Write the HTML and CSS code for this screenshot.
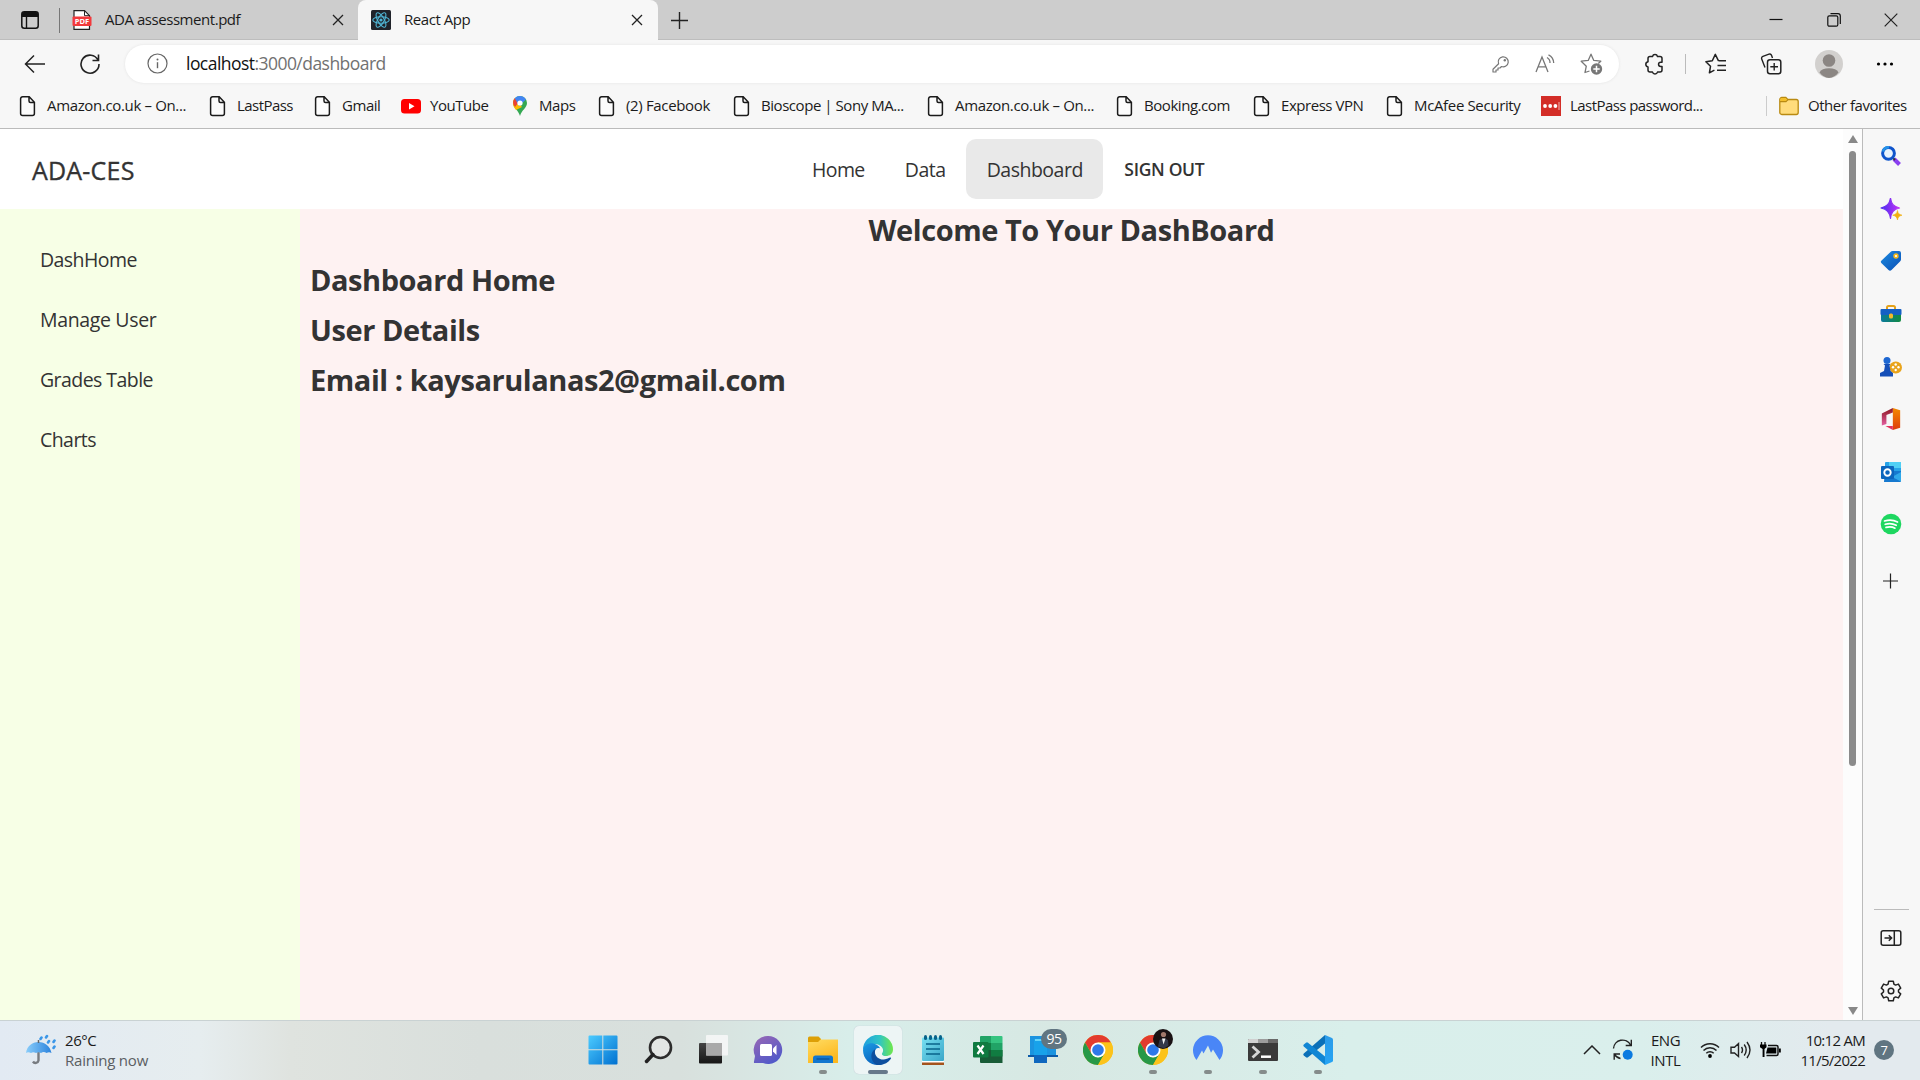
FILE: index.html
```html
<!DOCTYPE html>
<html lang="en">
<head>
<meta charset="utf-8">
<title>React App</title>
<link rel="stylesheet" href="styles.css">
</head>
<body>
<svg class="defs" width="0" height="0">
  <defs>
    <symbol id="file" viewBox="0 0 20 22"><path d="M4.600 1.800h6.600l5.200 5.400v11.200a2 2 0 0 1-2 2H4.600a2 2 0 0 1-2-2V3.800a2 2 0 0 1 2-2zM11 2v4a1.500 1.500 0 0 0 1.500 1.500h3.700" fill="#fcfcfc" stroke="#1b1b1b" stroke-width="1.500"/></symbol>
    <symbol id="close" viewBox="0 0 12 12"><path d="M1 1l10 10M11 1L1 11" stroke="#222" stroke-width="1.300"/></symbol>
    <symbol id="chrome" viewBox="0 0 30 30">
      <circle cx="15" cy="15" r="15" fill="#fbc116"/>
      <path d="M2 7.500A15 15 0 0 1 28 7.500L15 7.500 8.500 18.750z" fill="#e33b2e"/>
      <path d="M2 7.500L8.500 18.750 15 22.500 21.500 18.750 15 30A15 15 0 0 1 2 7.500z" fill="#279847"/>
      <path d="M28 7.500H15L21.500 18.750 15 30A15 15 0 0 0 28 7.500z" fill="#fcc31b"/>
      <circle cx="15" cy="15" r="7.500" fill="#fff"/><circle cx="15" cy="15" r="5.800" fill="#2f78ea"/>
    </symbol>
    <linearGradient id="gWin" x2="1" y2="1"><stop stop-color="#4ccbff"/><stop offset="1" stop-color="#0070d0"/></linearGradient>
    <linearGradient id="gDark" x2="0" y2="1"><stop stop-color="#444"/><stop offset="1" stop-color="#161616"/></linearGradient>
    <linearGradient id="gChat" x2="0.600" y2="1"><stop stop-color="#9a68b4"/><stop offset="1" stop-color="#5159c9"/></linearGradient>
    <linearGradient id="gFold" x2="0.500" y2="1"><stop stop-color="#ffdc63"/><stop offset="1" stop-color="#fdb81e"/></linearGradient>
    <linearGradient id="gEdge" x2="1"><stop stop-color="#1e9fe0"/><stop offset="0.550" stop-color="#2fc5c4"/><stop offset="1" stop-color="#70e84a"/></linearGradient>
    <linearGradient id="gEdge2" x2="0.500" y2="1"><stop stop-color="#1a9be4"/><stop offset="1" stop-color="#0b62bd"/></linearGradient>
    <linearGradient id="gNote" x2="1" y2="1"><stop stop-color="#78e0f2"/><stop offset="1" stop-color="#3aa6c8"/></linearGradient>
    <linearGradient id="gStar" x2="1"><stop stop-color="#4b2cf0"/><stop offset="1" stop-color="#c134f5"/></linearGradient>
    <linearGradient id="gBlue" x2="1" y2="1"><stop stop-color="#1d8be0"/><stop offset="1" stop-color="#0a4fb5"/></linearGradient>
    <linearGradient id="gGreen" x2="1"><stop stop-color="#0b7a9e"/><stop offset="1" stop-color="#128a42"/></linearGradient>
    <linearGradient id="gOff" x2="0" y2="1"><stop stop-color="#f48a00"/><stop offset="1" stop-color="#dd3a0c"/></linearGradient>
    <linearGradient id="gOff2" x2="0" y2="1"><stop stop-color="#8c1620"/><stop offset="1" stop-color="#e35fa0"/></linearGradient>
    <linearGradient id="gUmb" x2="1"><stop stop-color="#8acdfa"/><stop offset="1" stop-color="#2b83dd"/></linearGradient>
    <linearGradient id="gCode" x2="0" y2="1"><stop stop-color="#2c9be8"/><stop offset="1" stop-color="#25a4f4"/></linearGradient>
  </defs>
</svg>

<header class="tabs">
  <div class="tab-menu"><svg width="18" height="18" viewBox="0 0 18 18"><rect x=".8" y=".8" width="16.400" height="16.400" rx="2.500" fill="none" stroke="#111" stroke-width="1.500"/><path d="M1 3a2 2 0 0 1 2-2h12a2 2 0 0 1 2 2v3H1z" fill="#111"/><path d="M5.500 6v11" stroke="#111" stroke-width="1.400"/></svg></div>
  <div class="tab">
    <svg class="fav" viewBox="0 0 20 20"><path d="M2 .7h10.500l5 5v13.600H2z" fill="#fff" stroke="#222" stroke-width="1.200"/><path d="M12.500.7v5h5" fill="none" stroke="#222"/><rect x=".5" y="6.500" width="19" height="9.500" rx="1" fill="#f2393c"/><text x="10" y="14" class="pdf-label">PDF</text></svg>
    <span class="tab-title">ADA assessment.pdf</span>
    <svg class="x"><use href="#close"/></svg>
  </div>
  <div class="tab active">
    <svg class="fav" viewBox="0 0 20 20"><rect width="20" height="20" rx="1.500" fill="#20232a"/><g fill="none" stroke="#4fb6d6" stroke-width="1.100"><ellipse cx="10" cy="10" rx="8.200" ry="3.200"/><ellipse cx="10" cy="10" rx="8.200" ry="3.200" transform="rotate(60 10 10)"/><ellipse cx="10" cy="10" rx="8.200" ry="3.200" transform="rotate(120 10 10)"/></g><circle cx="10" cy="10" r="1.600" fill="#4fb6d6"/></svg>
    <span class="tab-title">React App</span>
    <svg class="x"><use href="#close"/></svg>
  </div>
  <svg class="new-tab" width="17" height="17" viewBox="0 0 17 17"><path d="M8.500 0v17M0 8.500h17" stroke="#222" stroke-width="1.400"/></svg>
  <div class="win-controls">
    <svg width="14" height="14" viewBox="0 0 14 14"><path d="M.5 6.500h13" stroke="#111" stroke-width="1.200"/></svg>
    <svg width="14" height="14" viewBox="0 0 14 14"><rect x=".8" y="2.800" width="10" height="10.400" rx="1.500" fill="none" stroke="#111" stroke-width="1.200"/><path d="M3.500.7h7.500a2.300 2.300 0 0 1 2.300 2.300v8" fill="none" stroke="#111" stroke-width="1.200"/></svg>
    <svg width="14" height="14" viewBox="0 0 14 14"><path d="M.7.700l12.600 12.600M13.300.7L.7 13.300" stroke="#222" stroke-width="1.200"/></svg>
  </div>
</header>

<div class="toolbar">
  <svg class="back" width="22" height="20" viewBox="0 0 22 20"><path d="M21 10H1.500M10 1.500L1.500 10l8.500 8.500" fill="none" stroke="#222" stroke-width="1.500"/></svg>
  <svg class="reload" width="22" height="22" viewBox="0 0 22 22"><path d="M19 7A9 9 0 1 0 20 11M19.500 1.500V7.500H13.500" fill="none" stroke="#222" stroke-width="1.600"/></svg>
  <div class="address">
    <svg class="info" width="21" height="21" viewBox="0 0 21 21"><circle cx="10.500" cy="10.500" r="9.500" fill="none" stroke="#666" stroke-width="1.200"/><path d="M10.500 9.200v6" stroke="#666" stroke-width="1.400"/><circle cx="10.500" cy="6.400" r="1" fill="#666"/></svg>
    <span class="url"><b>localhost</b>:3000/dashboard</span>
    <svg width="18" height="18" viewBox="0 0 18 18"><path d="M6.600 8.700A5 5 0 1 1 9.500 11.500L8 13H6v2H4v2H1v-2.800z" fill="none" stroke="#777" stroke-width="1.200" stroke-linejoin="round"/><circle cx="12.800" cy="5.200" r="1.200" fill="#777"/></svg>
    <svg width="20" height="20" viewBox="0 0 20 20"><path d="M1 18L7 3l6 15M3.200 12.800h7.600M12 3.500a6 6 0 0 1 3 5.500M13.500.8A9.500 9.500 0 0 1 18.700 9" fill="none" stroke="#777" stroke-width="1.300"/></svg>
    <svg width="23" height="22" viewBox="0 0 23 22"><path d="M9.500 18L5 19.500l1.300-6.300L1.200 8.200l7-.8L11 1.200l2.800 6.200 7 .8-2.500 2.300" fill="none" stroke="#777" stroke-width="1.300" stroke-linejoin="round"/><circle cx="16.500" cy="16" r="5.700" fill="#777"/><path d="M16.500 12.800v6.400M13.300 16h6.400" stroke="#fff" stroke-width="1.500"/></svg>
  </div>
  <div class="tools">
    <svg width="22" height="22" viewBox="0 0 22 22"><path d="M6 3.500h2.500a2.600 2.600 0 0 1 5 0H16q2 0 2 2V9.200h-1.300a2.100 2.100 0 0 0 0 4.300H18v3.600q0 2-2 2h-2.500a2.600 2.600 0 0 1-5 0H6q-2 0-2-2V14a2.700 2.700 0 0 1 0-5.300V5.500q0-2 2-2z" fill="none" stroke="#222" stroke-width="1.500" stroke-linejoin="round"/></svg>
    <i class="bar"></i>
    <svg width="22" height="22" viewBox="0 0 22 22"><path d="M13.500 7.800L10.300 1.400 7.300 7.700.9 8.700l4.600 4.600-1.100 6.500 5-2.600M13.500 7.800H21M12.500 12.500H21M12 17.200h9" fill="none" stroke="#222" stroke-width="1.500" stroke-linejoin="round"/></svg>
    <svg width="22" height="22" viewBox="0 0 22 22"><path d="M5 14.500L1.700 6A2 2 0 0 1 2.900 3.400L9 1.200a2 2 0 0 1 2.600 1.200L12.500 5" fill="none" stroke="#222" stroke-width="1.400"/><rect x="7.500" y="6.800" width="13.300" height="14" rx="2.500" fill="none" stroke="#222" stroke-width="1.500"/><path d="M14.200 10v7.600M10.300 13.800h7.700" stroke="#222" stroke-width="1.400"/></svg>
    <svg width="28" height="28" viewBox="0 0 28 28"><circle cx="14" cy="14" r="14" fill="#d2d0ce"/><circle cx="14" cy="10.500" r="6.300" fill="#8b8683"/><path d="M4.500 22.500a10 6 0 0 1 19 0A14 14 0 0 1 14 28a14 14 0 0 1-9.500-5.500z" fill="#8b8683"/></svg>
    <svg width="18" height="4" viewBox="0 0 18 4"><circle cx="2.500" cy="2" r="1.600"/><circle cx="9" cy="2" r="1.600"/><circle cx="15.500" cy="2" r="1.600"/></svg>
  </div>
</div>

<nav class="bookmarks">
  <a><svg><use href="#file"/></svg><span class="wide">Amazon.co.uk – On...</span></a>
  <a><svg><use href="#file"/></svg><span class="mid">LastPass</span></a>
  <a><svg><use href="#file"/></svg><span>Gmail</span></a>
  <a><svg viewBox="0 0 20 22"><rect y="4" width="20" height="14.500" rx="3.500" fill="#f00"/><path d="M8 8v6.500l5.500-3.200z" fill="#fff"/></svg><span>YouTube</span></a>
  <a><svg viewBox="0 0 20 22"><path d="M10 1a7 7 0 0 1 7 7c0 5-5.500 7-7 13C8.500 15 3 13 3 8a7 7 0 0 1 7-7z" fill="#34a853"/><path d="M3 8a7 7 0 0 1 1.800-4.700L12 12 6 15C4.500 13 3 11 3 8z" fill="#fbbc04"/><path d="M3.200 6.500A7 7 0 0 1 5 3l4 4-4 5C3.500 10 3 8.500 3.200 6.500z" fill="#ea4335"/><path d="M4.800 3.300A7 7 0 0 1 16 4.500L9 11z" fill="#4285f4"/><circle cx="10" cy="8" r="2.600" fill="#fff"/></svg><span>Maps</span></a>
  <a><svg><use href="#file"/></svg><span class="wide">(2) Facebook</span></a>
  <a><svg><use href="#file"/></svg><span>Bioscope | Sony MA...</span></a>
  <a><svg><use href="#file"/></svg><span class="wide">Amazon.co.uk – On...</span></a>
  <a><svg><use href="#file"/></svg><span>Booking.com</span></a>
  <a><svg><use href="#file"/></svg><span>Express VPN</span></a>
  <a><svg><use href="#file"/></svg><span class="wide">McAfee Security</span></a>
  <a><svg viewBox="0 0 20 22"><path fill="#d32d27" d="M0 1h20v20H0z"/><circle cx="4" cy="11" r="1.900" fill="#fff"/><circle cx="9.200" cy="11" r="1.900" fill="#fff"/><circle cx="14.400" cy="11" r="1.900" fill="#fff"/><path d="M18 7v8" stroke="#f3b5b2"/></svg><span class="mid">LastPass password...</span></a>
  <a class="other"><svg viewBox="0 0 20 22"><path d="M.8 4.500a2 2 0 0 1 2-2h4l2 2h8.400a2 2 0 0 1 2 2v11a2 2 0 0 1-2 2H2.800a2 2 0 0 1-2-2z" fill="#ffdc7c" stroke="#b98a12" stroke-width="1.300"/><path d="M1.400 4.500a1.300 1.300 0 0 1 1.300-1.400h3.800l1.700 1.700-1.500 1.700H1.400z" fill="#f3bf2a"/><path d="M1 6.700h6l2-2" fill="none" stroke="#b98a12" stroke-width="1.200"/></svg><span>Other favorites</span></a>
</nav>

<div class="viewport">
  <div class="page">
    <div class="navbar">
      <a class="brand">ADA-CES</a>
      <ul class="menu"><li>Home</li><li class="data">Data</li><li class="current">Dashboard</li><li class="signout">SIGN OUT</li></ul>
    </div>
    <div class="body">
      <ul class="drawer"><li class="snug">DashHome</li><li>Manage User</li><li class="snug">Grades Table</li><li class="snug">Charts</li></ul>
      <main><h2 class="welcome">Welcome To Your DashBoard</h2><h2>Dashboard Home</h2><h2>User Details</h2><h2>Email : kaysarulanas2@gmail.com</h2></main>
    </div>
  </div>
  <div class="scroll"><i class="up"></i><i class="thumb"></i><i class="down"></i></div>
  <aside class="apps">
    <div><svg viewBox="0 0 22 22"><path d="M14 14l5.500 5.500" stroke="#8a3ff0" stroke-width="4"/><path d="M12.500 12.500l2.500 2.500" stroke="#333" stroke-width="2"/><circle cx="8.500" cy="8.300" r="5.900" fill="#e8f3fd" stroke="#0f55cc" stroke-width="3"/><path d="M3 6.500a6 6 0 0 1 6-4.200" fill="none" stroke="#2593e8" stroke-width="2.500"/></svg></div>
    <div><svg viewBox="0 0 22 22"><path d="M10.500 0c.8 6 3 8.400 9 10-6 1.500-8.200 4-9 10.500-1-6.500-3.500-9-9.500-10.500C7 8.400 9.500 6 10.500 0z" fill="url(#gStar)" stroke="url(#gStar)" stroke-width="1.200" stroke-linejoin="round"/><path d="M17.500 12.500c.5 3 1.500 4 4.500 4.700-3 .7-4 1.800-4.500 4.800-.6-3-1.800-4.100-4.800-4.800 3-.7 4.200-1.700 4.800-4.700z" fill="#f2b010" stroke="#f2b010" stroke-width=".6"/></svg></div>
    <div><svg viewBox="0 0 22 22"><path d="M12.500 1H19a2 2 0 0 1 2 2v6.500q0 1-1 2L11.500 20q-1.500 1.500-3 0L1.300 13q-1-1.200 0-2.300L10.500 2q1-1 2-1z" fill="url(#gBlue)"/><circle cx="16" cy="6" r="1.900" fill="#fff" stroke="#f3b81c" stroke-width="1.600"/></svg></div>
    <div><svg viewBox="0 0 22 22"><path d="M7 7V4.500A1.500 1.500 0 0 1 8.500 3h5A1.500 1.500 0 0 1 15 4.500V7" fill="none" stroke="#e5a21a" stroke-width="2"/><path d="M1 11h20v6a2 2 0 0 1-2 2H3a2 2 0 0 1-2-2z" fill="url(#gGreen)"/><rect x=".5" y="6" width="21" height="6" rx="1" fill="#1560c4"/><rect x="9" y="10.500" width="4" height="5" rx="1.500" fill="#f4b92a"/></svg></div>
    <div><svg viewBox="0 0 22 22"><rect x="9.500" y="5.500" width="12.500" height="12" rx="6" fill="#e9a41c"/><g fill="#fff"><circle cx="15.700" cy="8.500" r="1.200"/><circle cx="15.700" cy="14" r="1.200"/><circle cx="13" cy="11.300" r="1.200"/><circle cx="18.500" cy="11.300" r="1.200"/></g><circle cx="7" cy="4.500" r="3.500" fill="#1d67d2"/><path d="M3.500 8h7l-1 1.500 1 5.500 2.500 2v3.500H0V17l4-2 1-5.500z" fill="#154fb8"/></svg></div>
    <div><svg viewBox="0 0 22 24"><path d="M13 0l8 2.500v19L13 24z" fill="url(#gOff)"/><path d="M13 0v5L6 7.500v10L1 19V6z" fill="url(#gOff2)"/><path d="M5 19.500h8V24z" fill="#e2325e"/></svg></div>
    <div><svg viewBox="0 0 22 22"><rect x="5" y="1" width="16" height="10" rx="1" fill="#27a3e8"/><path d="M9 1h12v6H9z" fill="#50d0f5"/><path d="M5 10h16v10a1 1 0 0 1-1 1H4z" fill="#1679cf"/><path d="M21 11v9.500L12 16z" fill="#30a9ea"/><rect x="1" y="5" width="13" height="13" rx="1" fill="#0c66bd"/><circle cx="7.500" cy="11.500" r="3.200" fill="none" stroke="#fff" stroke-width="1.900"/></svg></div>
    <div><svg viewBox="0 0 22 22"><circle cx="11" cy="11" r="10.300" fill="#1ed760"/><path d="M4.500 8q7-2.200 13 1M5.200 11.300q6-1.700 11 1M6 14.400q5-1.400 9 .8" fill="none" stroke="#fff" stroke-width="1.700" stroke-linecap="round"/></svg></div>
    <div class="add"><svg viewBox="0 0 22 22"><path d="M10.500 3.500v15M3 11h15" stroke="#222" stroke-width="1.200"/></svg></div>
    <div class="dock first"><svg viewBox="0 0 22 22"><rect x="1.200" y="3.700" width="19.600" height="14.600" rx="2" fill="none" stroke="#222" stroke-width="1.500"/><path d="M14.300 4v14M4.500 11h7M8.800 8.200l2.800 2.800-2.800 2.800" fill="none" stroke="#222" stroke-width="1.500"/></svg></div>
    <div class="dock"><svg viewBox="0 0 22 22"><path d="M8.700 1.200h4.600l.6 2.900 1.700 1 2.800-1 2.300 4-2.200 1.900v2l2.200 1.900-2.300 4-2.800-1-1.700 1-.6 2.900H8.700l-.6-2.900-1.700-1-2.800 1-2.300-4L3.500 12v-2L1.300 8.100l2.300-4 2.800 1 1.700-1z" fill="none" stroke="#222" stroke-width="1.500" stroke-linejoin="round"/><circle cx="11" cy="11" r="2.800" fill="none" stroke="#222" stroke-width="1.500"/></svg></div>
  </aside>
</div>

<footer class="taskbar">
  <div class="weather">
    <svg width="30" height="32" viewBox="0 0 30 32"><path d="M12.500 16v10.500a3 3 0 0 1-5.500 1" fill="none" stroke="#777b80" stroke-width="2.400"/><path d="M0 19C1 12 6 8 12.500 8S24 12 25.500 19q-2.500-1.500-5 0-3-2-5.500 0-2.500-1.500-5 0-3-1.500-5 0-3-1.500-5 0z" fill="url(#gUmb)"/><path d="M12.500 6v3" stroke="#666" stroke-width="1.500"/><path d="M14.500 5l1-1.500M20 3.500L21 2M22 8.500L23 7M27.500 8l1-1.500M27.500 14l1-1.500" stroke="#3a96e8" stroke-width="2.600" stroke-linecap="round"/></svg>
    <p><span class="temp">26°C</span><br><span class="cond">Raining now</span></p>
  </div>
  <div class="launch">
    <div><svg viewBox="0 0 30 30"><path d="M.5 1.500q0-1 1-1h12.800v13.800H.5zM15.300.5h13.200q1 0 1 1v12.800H15.300zM.5 15.300h13.800v14.200H1.500q-1 0-1-1zM15.300 15.300h14.200v13.200q0 1-1 1H15.300z" fill="url(#gWin)"/></svg></div>
    <div><svg viewBox="0 0 30 30"><circle cx="17.500" cy="12.500" r="10.500" fill="#e3e6e4" stroke="#2d2d2d" stroke-width="2.600"/><path d="M10 19.500L3.500 26.500" stroke="#222" stroke-width="3.500" stroke-linecap="round"/></svg></div>
    <div><svg viewBox="0 0 30 30"><rect x="1" y="8" width="23" height="20.500" rx="1" fill="url(#gDark)"/><rect x="8" y="0" width="22" height="20.500" rx="1" fill="#f8f8f8" opacity=".85"/><path d="M8 8h16v12.500H8z" fill="#a9a9a9"/></svg></div>
    <div><svg viewBox="0 0 30 30"><path d="M15 1a14 14 0 1 1-5 27H2q-1.500 0-1-1.500L2 21A14 14 0 0 1 15 1z" fill="url(#gChat)"/><rect x="7" y="9" width="12" height="12" rx="1.500" fill="#fff"/><path d="M20 13.500l3.500-3.500v10L20 16.500z" fill="#fff"/></svg></div>
    <div class="open"><svg viewBox="0 0 30 30"><path d="M0 3q0-1.500 1.500-1.500h9L13 4v5H0z" fill="#dda007"/><path d="M0 7h10l2.500-2.500H30V28H0z" fill="url(#gFold)"/><path d="M5 28v-5q0-2.500 2.500-2.500h15Q25 20.500 25 23v5z" fill="#1277cf"/><path d="M8.500 24h13" stroke="#075095" stroke-width="1.200"/></svg></div>
    <div class="open focused"><svg viewBox="0 0 30 30"><path d="M0 15A15 15 0 0 1 30 14.500C30 19 26.500 21 23 21c-3 0-4.800-1.500-3.800-2.800C22 14 18 9 11.500 9 6 9 1.500 12 0 15z" fill="url(#gEdge)"/><path d="M0 15C1 10 6 7.500 10.500 8.500c4 1 6 3 6.500 5-3-1.500-5.500 1-5.200 5C12 25 17 29 21 28.500 12 33 0 27 0 15z" fill="url(#gEdge2)"/><path d="M12.500 14c-2.500 6 3 11 8.500 10.500 3-.2 5-2 6.500-2 .8 0 .8.800 0 1.800C24.500 28.500 19 30.700 14 29.900 7 27 6.500 17 12.500 14z" fill="#0e4f9e"/></svg></div>
    <div><svg viewBox="0 0 30 30"><path d="M4 26h22v4H4z" fill="#a3531c"/><path d="M4 25h22v2.500H4z" fill="#fff"/><rect x="4" y="2.500" width="22" height="23.500" rx="1" fill="url(#gNote)"/><path d="M8 9h14M8 14h14M8 19h14" stroke="#08638a" stroke-width="1.700"/><g fill="#08638a"><rect x="6" width="3" height="5" rx="1.500"/><rect x="11" width="3" height="5" rx="1.500"/><rect x="16" width="3" height="5" rx="1.500"/><rect x="21" width="3" height="5" rx="1.500"/></g></svg></div>
    <div><svg viewBox="0 0 30 30"><path d="M7 2q0-1 1-1h10v7H7z" fill="#21a366"/><path d="M18 1h10.500q1 0 1 1v6H18z" fill="#35c480"/><path d="M7 8h11v7H7z" fill="#107c41"/><path d="M18 8h11.500v7H18z" fill="#21a366"/><path d="M7 15h22.500v13H8q-1 0-1-1z" fill="#185c37"/><path d="M18 15h11.500v6.500H18z" fill="#107c41"/><rect x="0" y="7" width="15.500" height="15.500" rx="1" fill="#0f7a40"/><path d="M4.500 10.500l6 8.500M10.500 10.500l-6 8.500" stroke="#fff" stroke-width="2.200"/></svg></div>
    <div><svg viewBox="0 0 30 30"><path d="M2 1h13v20H2zM14 9h14v12H14z" fill="#1b94e0"/><path d="M0 20h30v2H0z" fill="#0b5aa8"/><path d="M6 4h13v18H6z" fill="#22b0f2"/><path d="M6 17h13v11H6z" fill="#0f67be"/><path d="M6 4h13v16H6z" fill="#18a2ea"/><path d="M7 5h11" stroke="#7ee4ff" stroke-width="1.500"/></svg><b class="count">95</b></div>
    <div><svg><use href="#chrome"/></svg></div>
    <div class="open"><svg><use href="#chrome"/></svg><svg class="profile" viewBox="0 0 20 20"><circle cx="10" cy="10" r="10" fill="#1a1214"/><circle cx="10.500" cy="5.500" r="2.600" fill="#a2786b"/><path d="M5 17.500l1.500-6.500 3-1.500h2.500l3 1.500.5 5.500-4.500 3z" fill="#343848"/><path d="M9 9.500l1.500 6 2-6z" fill="#eee"/></svg></div>
    <div class="open"><svg viewBox="0 0 30 30"><path d="M3.500 25A15 15 0 1 1 26.500 25L20 14.500l-2 3.200-3-7.200-4.500 8-1.500-3z" fill="#4a86f7"/></svg></div>
    <div class="open"><svg viewBox="0 0 30 30"><rect y="4" width="30" height="22" rx="1" fill="#3a3a3a"/><path d="M0 5q0-1 1-1h9v4H0z" fill="#d0d0d0"/><path d="M10 4h10v4H10z" fill="#9c9c9c"/><path d="M20 4h9q1 0 1 1v3H20z" fill="#696969"/><path d="M4.500 11.500l6 5.500-6 5.500" fill="none" stroke="#d5d5d5" stroke-width="2.800"/><path d="M13 21.700h10" stroke="#fff" stroke-width="2.500"/></svg></div>
    <div class="open"><svg viewBox="0 0 30 30"><path d="M22 0L.8 18.500q-1 1 0 2l2.200 1.800q1 .7 2 0L22 8.500z" fill="#0b70b8"/><path d="M22 30L.8 11.500q-1-1 0-2L3 7.700q1-.7 2 0L22 21.500z" fill="#1086d4"/><path d="M22 0l7 3q1 .5 1 1.500v21q0 1-1 1.500l-7 3z" fill="url(#gCode)"/></svg></div>
  </div>
  <div class="tray">
    <svg class="chev" width="18" height="10" viewBox="0 0 18 10"><path d="M1 9l8-8 8 8" fill="none" stroke="#222" stroke-width="1.500"/></svg>
    <svg class="sync" width="22" height="22" viewBox="0 0 22 22"><path d="M1.500 9.500A9 9 0 0 1 18.500 6M19.300.8v5.700h-5.600M8 15H2.200v5.700M2.500 15.500a9 9 0 0 0 6 4" fill="none" stroke="#222" stroke-width="1.400"/><circle cx="15.700" cy="15.700" r="5" fill="#0b7ae0"/></svg>
    <p class="lang">ENG<br>INTL</p>
    <svg class="wifi" width="20" height="18" viewBox="0 0 20 18"><path d="M1 6.500a12.500 12.500 0 0 1 18 0M3.500 9.500a9 9 0 0 1 13 0M6.300 12.300a5.200 5.200 0 0 1 7.400 0" fill="none" stroke="#222" stroke-width="1.500"/><circle cx="10" cy="15" r="1.900"/></svg>
    <svg class="sound" width="21" height="18" viewBox="0 0 21 18"><path d="M1 6.200h3.500L8.500 2.500v13L4.500 12H1zM11.500 6q2 3 0 6M14.200 3.500q4 5.500 0 11M17 1q6 8 0 16" fill="none" stroke="#222" stroke-width="1.400"/></svg>
    <svg class="batt" width="21" height="18" viewBox="0 0 21 18"><path d="M1.500 1v3M5 1v3" stroke="#111" stroke-width="1.300"/><path d="M0 3.500h6.500v2.700L4.500 8v8H2.600V8L0 6.200z"/><path d="M8 4.500h8.500q1.500 0 1.500 1.500v7q0 1.500-1.500 1.500H6.500" fill="none" stroke="#111" stroke-width="1.500"/><path d="M7.500 6.500h8.800v6H6z"/><path d="M19 7.500h1.800v4H19z"/></svg>
    <p class="clock">10:12 AM<br>11/5/2022</p>
    <b class="notif">7</b>
  </div>
</footer>
</body>
</html>
```
FILE: styles.css
```css
* { box-sizing: border-box; }
body {
  margin: 0;
  width: 1920px;
  height: 1080px;
  overflow: hidden;
  display: flex;
  flex-direction: column;
  font: 15px/20px "Open Sans", "Noto Sans", sans-serif;
  letter-spacing: -0.45px;
  color: #1b1b1b;
  background: #f7f7f7;
}
svg { display: block; flex: none; }
p, h2, ul { margin: 0; padding: 0; }
ul { list-style: none; }
.defs { position: absolute; }

/* tab strip */
.tabs {
  height: 40px;
  flex: none;
  display: flex;
  align-items: center;
  background: #cdcdcd;
  box-shadow: inset 0 -1px #bdbdbd;
}
.tab-menu {
  width: 60px;
  height: 25px;
  padding-left: 21px;
  display: flex;
  align-items: center;
  border-right: 1px solid #777;
}
.tab { width: 298px; height: 40px; padding: 0 14px 0 12px; display: flex; align-items: center; }
.tab.active { width: 300px; padding: 0 15px 0 13px; background: #f7f7f7; border-radius: 8px 8px 0 0; }
.fav { width: 20px; height: 20px; margin-right: 13px; }
.tab-title { flex: 1; padding-bottom: 2px; }
.x { width: 12px; height: 12px; }
.pdf-label { font: 700 7.5px "Open Sans", sans-serif; letter-spacing: 0; text-anchor: middle; fill: #fff; }
.new-tab { margin-left: 13px; }
.win-controls { margin-left: auto; padding-right: 22px; display: flex; gap: 43.5px; }

/* toolbar */
.toolbar { height: 47px; flex: none; display: flex; align-items: center; padding-left: 24px; }
.back { margin-right: 33px; }
.address {
  width: 1494px;
  height: 38px;
  margin-left: 24px;
  padding: 0 16px 0 22px;
  display: flex;
  align-items: center;
  gap: 25px;
  border-radius: 19px;
  background: #fff;
  box-shadow: 0 0 3px #e2e2e2;
}
.info { margin-right: -7px; }
.url { flex: 1; padding-bottom: 2px; font-size: 17.5px; letter-spacing: -0.54px; color: #717171; }
.url b { font-weight: 400; color: #111; }
.tools { display: flex; align-items: center; gap: 33px; padding-left: 25px; }
.bar { width: 1px; height: 20px; margin: 0 -14px; background: #bbb; }

/* favourites */
.bookmarks {
  height: 42px;
  flex: none;
  padding: 0 12px 4px 18px;
  display: grid;
  grid-template-columns: 190px 105px 88px 109px 87px 135px 194px 189px 137px 133px 156px 225px 1fr;
  align-items: center;
  border-bottom: 1px solid #bbb;
}
.bookmarks a { display: flex; align-items: center; gap: 9px; white-space: nowrap; }
.bookmarks svg { width: 20px; height: 22px; }
.bookmarks span { padding-bottom: 2px; }
.bookmarks .wide { letter-spacing: -0.35px; }
.bookmarks .mid { letter-spacing: -0.56px; }
.other { height: 20px; padding-left: 12px; border-left: 1px solid #ccc; }

/* page */
.viewport { height: 891px; flex: none; display: flex; }
.page { width: 1843px; display: flex; flex-direction: column; background: #fff; color: #333; }
.navbar { height: 80px; flex: none; display: flex; align-items: center; padding-left: 32px; }
.brand { width: 760px; padding-top: 2px; font-size: 25px; letter-spacing: 0.2px; -webkit-text-stroke: 0.35px #333; }
.menu { display: flex; align-items: center; font-size: 19.5px; letter-spacing: -0.6px; }
.menu li { height: 60px; line-height: 62px; padding: 0 20px; white-space: nowrap; }
.menu .data { padding-right: 20.5px; letter-spacing: -0.45px; }
.menu .current { padding: 0 20.5px; letter-spacing: -0.5px; background: #e9e9e9; border-radius: 10px; }
.menu .signout { padding-left: 21px; font-size: 17.5px; line-height: 61px; font-weight: 600; letter-spacing: -0.32px; }
.body { flex: 1; display: flex; }
.drawer { width: 300px; padding: 20px 40px; background: #f7ffe6; font-size: 19.5px; letter-spacing: -0.35px; }
.drawer li { height: 60px; line-height: 62px; }
.drawer .snug { letter-spacing: -0.56px; }
main { flex: 1; padding: 0 10px; background: #fef2f2; }
h2 { height: 50px; padding-top: 1px; font-size: 29px; line-height: 40px; font-weight: 700; letter-spacing: -0.44px; }
.welcome { text-align: center; }

.scroll { width: 20px; padding: 6px 0 5px; display: flex; flex-direction: column; align-items: center; background: #fcfcfc; border-right: 1px solid #bbb; }
.up { border: 5px solid transparent; border-top: 0; border-bottom: 8px solid #888; }
.thumb { width: 7px; height: 615px; margin-top: 8px; border-radius: 4px; background: #8b8b8b; }
.down { margin-top: auto; border: 5px solid transparent; border-bottom: 0; border-top: 8px solid #888; }

.apps { width: 56px; padding: 1px 0 3px; display: flex; flex-direction: column; align-items: center; }
.apps div { height: 52.6px; flex: none; display: flex; align-items: center; }
.apps svg { width: 22px; height: 22px; }
.apps .add { margin-top: 4px; }
.apps .dock { width: 35px; justify-content: center; height: 52px; }
.apps .first { margin-top: auto; height: 56px; border-top: 1px solid #bbb; }

/* taskbar */
.taskbar {
  height: 60px;
  padding-bottom: 1px;
  display: grid;
  grid-template-columns: 575px 1fr 345px;
  align-items: center;
  border-top: 1px solid #c9d2d3;
  background: linear-gradient(90deg, #e2eaf3 0, #e6edef 200px, #dfe3df 290px, #d9dfdc 480px, #d8e0dd 680px, #d8eeea 850px, #d7e8e3 1050px, #d9efeb 1350px, #daefec 1640px, #e3eaee 1830px);
}
.taskbar p { line-height: 20px; padding-bottom: 1px; }
.weather { display: flex; align-items: center; gap: 9px; padding-left: 26px; }
.cond { color: #5a5e62; letter-spacing: -0.22px; }
.launch { display: flex; }
.launch div { position: relative; width: 55px; height: 48px; display: flex; align-items: center; justify-content: center; }
.launch svg { width: 30px; height: 30px; }
.launch .focused { width: 48px; margin: 0 3.5px; border-radius: 5px; background: #edf5f5; box-shadow: 0 0 1px #bbc; }
.open::after { content: ""; position: absolute; bottom: 0; width: 8px; height: 4px; border-radius: 2px; background: #858c8b; }
.launch .focused::after { width: 20px; background: #66788a; }
.launch .profile { position: absolute; left: 28px; top: 3px; width: 20px; height: 20px; }
.count { position: absolute; left: 26px; top: 3px; width: 26px; height: 20px; border-radius: 10px; background: #607581; color: #fff; font-size: 14px; font-weight: 400; text-align: center; }
.tray { display: flex; align-items: center; padding-left: 8px; }
.sync { margin-left: 11px; }
.lang { width: 63px; text-align: center; }
.wifi { margin-left: 3px; }
.sound { margin-left: 10px; }
.batt { margin-left: 9px; }
.clock { width: 84px; text-align: right; letter-spacing: -0.72px; }
.notif { width: 20px; height: 20px; margin-left: 9px; border-radius: 50%; background: #607581; color: #fff; font-size: 13px; font-weight: 400; text-align: center; }
```
